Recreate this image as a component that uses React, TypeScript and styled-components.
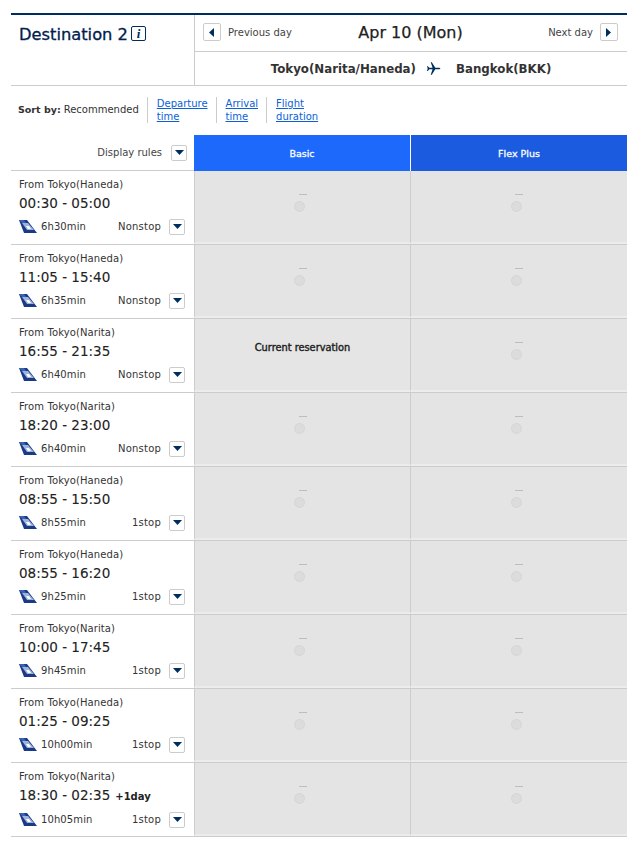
import React from 'react';
import styled, { createGlobalStyle } from 'styled-components';

const GlobalStyle = createGlobalStyle`
  html, body {
    margin: 0;
    padding: 0;
    background: #fff;
    font-family: 'DejaVu Sans', Verdana, sans-serif;
    color: #222;
  }
`;

const Page = styled.div`
  width: 616px;
  margin: 13px 0 0 11px;
  border-top: 2px solid #002d5f;
`;

const Head = styled.div`
  display: flex;
  height: 70px;
  border-bottom: 1px solid #ccc;
`;

const TitleCell = styled.div`
  width: 184px;
  flex: none;
  padding: 10px 0 0 8px;
  box-sizing: border-box;
  border-right: 1px solid #ccc;
  display: flex;
  align-items: flex-start;
  gap: 3px;
`;

const Title = styled.h2`
  margin: 0;
  font-size: 16.3px;
  line-height: 20px;
  font-weight: 400;
  color: #002050;
  -webkit-text-stroke: 0.3px #002050;
`;

const InfoIcon = styled.span`
  width: 15px;
  height: 15px;
  box-sizing: border-box;
  margin-top: 1px;
  border: 1px solid #002d5f;
  border-radius: 2px;
  display: flex;
  align-items: center;
  justify-content: center;
  font: italic 700 13px 'Liberation Serif', serif;
  color: #002d5f;
`;

const DatePane = styled.div`
  flex: 1;
  display: flex;
  flex-direction: column;
`;

const DateRow = styled.div`
  height: 37px;
  display: flex;
  align-items: center;
  justify-content: space-between;
  padding: 0 9px 2px 8px;
  box-sizing: border-box;
  border-bottom: 1px solid #ccc;
`;

const DayNav = styled.div<{ $end?: boolean }>`
  width: 110px;
  display: flex;
  align-items: center;
  gap: 7px;
  font-size: 10px;
  color: #444;
  justify-content: ${(p) => (p.$end ? 'flex-end' : 'flex-start')};
`;

const ArrowBox = styled.span<{ $small?: boolean }>`
  width: ${(p) => (p.$small ? 16 : 18)}px;
  height: ${(p) => (p.$small ? 16 : 18)}px;
  box-sizing: border-box;
  flex: none;
  border: 1px solid #ccc;
  border-radius: 2px;
  display: flex;
  align-items: center;
  justify-content: center;
`;

const DateText = styled.div`
  font-size: 16px;
  color: #222;
  -webkit-text-stroke: 0.25px #222;
`;

const RouteRow = styled.div`
  flex: 1;
  display: flex;
  align-items: center;
  justify-content: center;
  font-size: 11.8px;
  font-weight: 700;
  color: #333;
`;

const PlaneIcon = styled.svg`
  margin: 0 15px 0 10px;
`;

const SortRow = styled.div`
  height: 49px;
  display: flex;
  align-items: center;
  padding: 0 0 2px 7px;
  box-sizing: border-box;
  font-size: 10px;
  color: #333;
`;

const SortLabel = styled.b`
  margin-right: 3px;
  font-size: 9.5px;
`;

const SortLink = styled.a`
  display: block;
  margin-left: 8px;
  padding-left: 9px;
  border-left: 1px solid #ccc;
  line-height: 13px;
  color: #0b5fd8;
  text-decoration: underline;
  white-space: pre-line;
`;

const ColumnHead = styled.div`
  display: grid;
  grid-template-columns: 183px 216px 217px;
  height: 36px;
`;

const RulesCell = styled.div`
  display: flex;
  align-items: center;
  justify-content: flex-end;
  gap: 9px;
  padding-right: 7px;
  font-size: 10px;
  color: #444;
  border-bottom: 1px solid #ccc;
`;

const FareHead = styled.div<{ $bg: string }>`
  display: flex;
  align-items: center;
  justify-content: center;
  background: ${(p) => p.$bg};
  color: #fff;
  font-size: 9.5px;
  -webkit-text-stroke: 0.3px #fff;
  & + & {
    border-left: 1px solid #fff;
  }
`;

const Row = styled.div`
  display: grid;
  grid-template-columns: 183px 216px 217px;
  height: 74px;
`;

const FlightCell = styled.div`
  padding: 8px 9px 0 8px;
  border-bottom: 1px solid #ccc;
  font-size: 10px;
  color: #333;
`;

const Origin = styled.div`
  line-height: 12px;
  letter-spacing: 0.1px;
`;

const Times = styled.div`
  margin-top: 4px;
  font-size: 13.5px;
  line-height: 17px;
  color: #222;
  -webkit-text-stroke: 0.1px #222;
`;

const PlusDay = styled.b`
  margin-left: 5px;
  font-size: 10px;
  -webkit-text-stroke: 0;
`;

const Meta = styled.div`
  margin-top: 6px;
  display: flex;
  align-items: center;
  height: 17px;
`;

const Duration = styled.span`
  margin-left: 4px;
  flex: 1;
  letter-spacing: 0.1px;
`;

const Stops = styled.span`
  margin-right: 8px;
  letter-spacing: 0.2px;
`;

const FareCell = styled.div<{ $current?: boolean }>`
  background: ${(p) => (p.$current ? '#e5e5e5' : '#e3e4e3')};
  border-left: 1px solid #ccc;
  border-bottom: 2px solid #ececec;
  box-shadow: 0 1px 0 #ccc;
  box-sizing: border-box;
  height: 73px;
  font-size: 9.8px;
  color: #222;
  -webkit-text-stroke: ${(p) => (p.$current ? '0.4px #222' : '0')};
  padding-bottom: ${(p) => (p.$current ? 15 : 0)}px;
  display: flex;
  flex-direction: column;
  align-items: center;
  justify-content: center;
`;

const Dash = styled.div`
  width: 8px;
  height: 1px;
  margin-bottom: 6px;
  background: #bdbdbd;
`;

const Radio = styled.div`
  width: 9px;
  height: 9px;
  border-radius: 50%;
  background: #dcdcdc;
  border: 0.5px solid #d6d6d6;
  margin: 0 6px 7px 0;
`;

const Triangle = ({ dir }: { dir: 'left' | 'right' | 'down' }) => {
  const points = { left: '7,1 2,5.5 7,10', right: '2,1 7,5.5 2,10', down: '1,3 10,3 5.5,8' }[dir];
  return (
    <svg width="11" height="11" viewBox="0 0 11 11">
      <polygon points={points} fill="#002d5f" />
    </svg>
  );
};

const TailIcon = () => (
  <svg width="18" height="13" viewBox="0 0 18 13">
    <polygon points="0,0 8,0 18,13 5,13" fill="#1b3a86" />
    <polygon points="3,3 9,3 15,10 8,10" fill="#9db3dc" />
    <polygon points="0,0 5,0 7,3 3,3" fill="#3a62b5" />
    <polygon points="7,6 10,6 12,9 9,9" fill="#ffffff" />
  </svg>
);

type Flight = { from: string; times: string; dur: string; stops: string; plus?: boolean; current?: boolean };

const flights: Flight[] = [
  { from: 'From Tokyo(Haneda)', times: '00:30 - 05:00', dur: '6h30min', stops: 'Nonstop' },
  { from: 'From Tokyo(Haneda)', times: '11:05 - 15:40', dur: '6h35min', stops: 'Nonstop' },
  { from: 'From Tokyo(Narita)', times: '16:55 - 21:35', dur: '6h40min', stops: 'Nonstop', current: true },
  { from: 'From Tokyo(Narita)', times: '18:20 - 23:00', dur: '6h40min', stops: 'Nonstop' },
  { from: 'From Tokyo(Haneda)', times: '08:55 - 15:50', dur: '8h55min', stops: '1stop' },
  { from: 'From Tokyo(Haneda)', times: '08:55 - 16:20', dur: '9h25min', stops: '1stop' },
  { from: 'From Tokyo(Narita)', times: '10:00 - 17:45', dur: '9h45min', stops: '1stop' },
  { from: 'From Tokyo(Haneda)', times: '01:25 - 09:25', dur: '10h00min', stops: '1stop' },
  { from: 'From Tokyo(Narita)', times: '18:30 - 02:35', dur: '10h05min', stops: '1stop', plus: true },
];

const EmptyFare = () => (
  <FareCell>
    <Dash />
    <Radio />
  </FareCell>
);

const App: React.FC = () => (
  <Page>
    <GlobalStyle />
    <Head>
      <TitleCell>
        <Title>Destination 2</Title>
        <InfoIcon>i</InfoIcon>
      </TitleCell>
      <DatePane>
        <DateRow>
          <DayNav>
            <ArrowBox>
              <Triangle dir="left" />
            </ArrowBox>
            Previous day
          </DayNav>
          <DateText>Apr 10 (Mon)</DateText>
          <DayNav $end>
            Next day
            <ArrowBox>
              <Triangle dir="right" />
            </ArrowBox>
          </DayNav>
        </DateRow>
        <RouteRow>
          <span>Tokyo(Narita/Haneda)</span>
          <PlaneIcon width="15" height="15" viewBox="0 0 24 24">
            <path
              d="M23 12c0-.8-1.2-1.2-2.5-1.2h-5.7L9.3 2H7.6l2.9 8.8H5.2L3 8.2H1.6l1.1 3.8-1.1 3.8H3l2.2-2.6h5.3L7.6 22h1.7l5.5-8.8h5.7c1.3 0 2.5-.4 2.5-1.2z"
              fill="#002d5f"
            />
          </PlaneIcon>
          <span>Bangkok(BKK)</span>
        </RouteRow>
      </DatePane>
    </Head>
    <SortRow>
      <SortLabel>Sort by:</SortLabel>
      Recommended
      <SortLink>{'Departure\ntime'}</SortLink>
      <SortLink>{'Arrival\ntime'}</SortLink>
      <SortLink>{'Flight\nduration'}</SortLink>
    </SortRow>
    <ColumnHead>
      <RulesCell>
        Display rules
        <ArrowBox $small>
          <Triangle dir="down" />
        </ArrowBox>
      </RulesCell>
      <FareHead $bg="#1c69fb">Basic</FareHead>
      <FareHead $bg="#1a5be0">Flex Plus</FareHead>
    </ColumnHead>
    {flights.map((f) => (
      <Row key={f.times}>
        <FlightCell>
          <Origin>{f.from}</Origin>
          <Times>
            {f.times}
            {f.plus && <PlusDay>+1day</PlusDay>}
          </Times>
          <Meta>
            <TailIcon />
            <Duration>{f.dur}</Duration>
            <Stops>{f.stops}</Stops>
            <ArrowBox $small>
              <Triangle dir="down" />
            </ArrowBox>
          </Meta>
        </FlightCell>
        {f.current ? <FareCell $current>Current reservation</FareCell> : <EmptyFare />}
        <EmptyFare />
      </Row>
    ))}
  </Page>
);

export default App;
